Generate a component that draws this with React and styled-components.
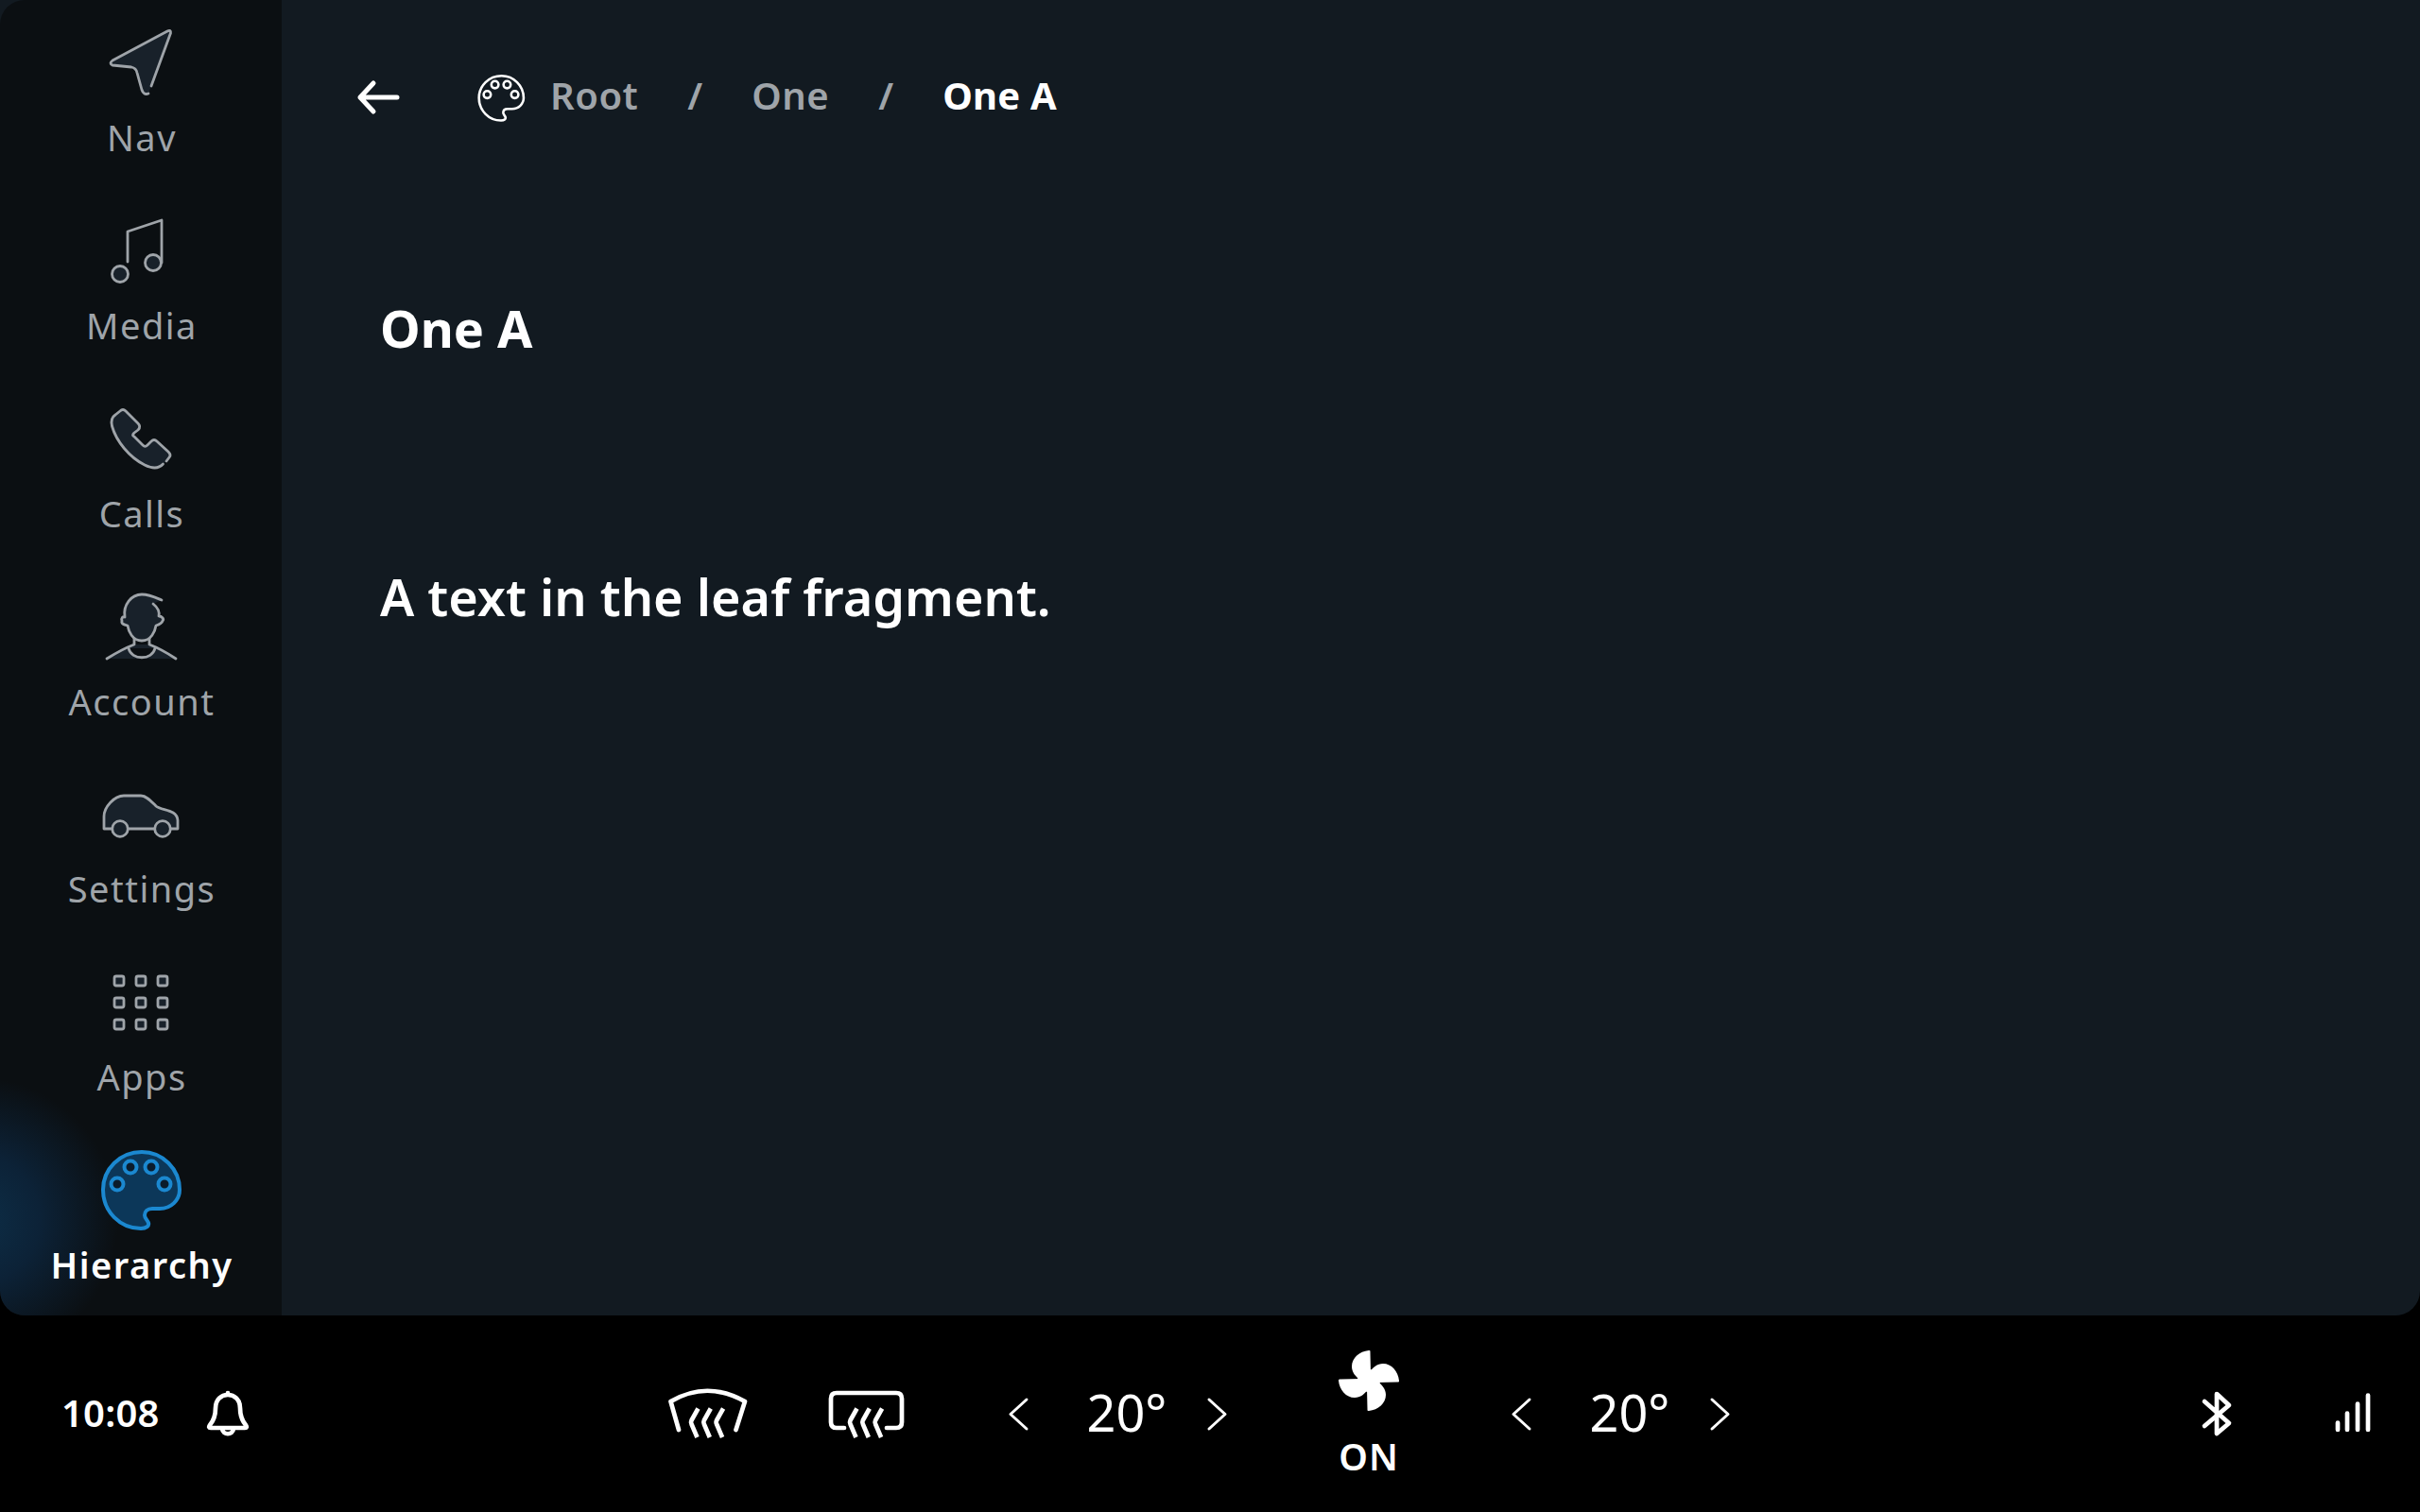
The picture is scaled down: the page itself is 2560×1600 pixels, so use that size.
import React from 'react'
import styled, { createGlobalStyle } from 'styled-components'

const GlobalStyle = createGlobalStyle`
  html, body {
    margin: 0;
    padding: 0;
    background: #000;
  }
  body {
    font-family: "Noto Sans", sans-serif;
  }
`

const Screen = styled.div`
  width: 2560px;
  height: 1600px;
  display: flex;
  flex-direction: column;
  background: #000;
  overflow: hidden;
`

const Main = styled.div`
  height: 1392px;
  display: flex;
  background: #121a21;
  border-radius: 0 0 26px 26px;
  overflow: hidden;
`

const Rail = styled.nav`
  width: 298px;
  flex: none;
  display: grid;
  grid-template-rows: repeat(7, 1fr);
  background: radial-gradient(circle 150px at -25px 1290px, #0d2e47 0%, #0c2237 45%, rgba(11, 15, 18, 0) 100%), #0b0f12;
  border-radius: 26px 0 0 26px;
`

const RailItem = styled.div`
  display: flex;
  flex-direction: column;
  align-items: center;
  padding-top: 17px;
  color: ${props => (props.$active ? '#fff' : '#9fa4a9')};
`

const RailLabel = styled.span`
  margin-top: 6px;
  padding-left: 2px;
  font-size: 38px;
  line-height: 52px;
  letter-spacing: 1.5px;
  font-weight: ${props => (props.$active ? 600 : 400)};
`

const Icon = styled.svg`
  width: 96px;
  height: 96px;
  flex: none;
  display: block;
  fill: #18212a;
  stroke: #9fa4a9;
  stroke-width: 2.8;
  stroke-linecap: round;
  stroke-linejoin: round;
`

const ActiveIcon = styled(Icon)`
  fill: #0c3759;
  stroke: #1b88d0;
  stroke-width: 4;
`

const Content = styled.section`
  flex: 1;
  display: flex;
  flex-direction: column;
`

const Breadcrumbs = styled.header`
  height: 201px;
  display: flex;
  align-items: center;
  padding-left: 62px;
`

const BackIcon = styled.svg`
  width: 80px;
  height: 80px;
  margin-top: 5px;
  flex: none;
  fill: none;
  stroke: #fff;
  stroke-width: 5;
  stroke-linecap: round;
  stroke-linejoin: round;
`

const CrumbIcon = styled.svg`
  width: 56px;
  height: 56px;
  margin-top: 5px;
  margin-left: 62px;
  flex: none;
  fill: none;
  stroke: #fff;
  stroke-width: 4.4;
`

const Crumb = styled.span`
  font-size: 40px;
  letter-spacing: ${props => (props.$current ? '0.2px' : '0.5px')};
  font-weight: ${props => (props.$current ? 700 : 600)};
  color: ${props => (props.$current ? '#fff' : '#9fa4a9')};
  margin-left: ${props => (props.$first ? '24px' : '0')};
`

const Slash = styled.span`
  font-size: 40px;
  font-weight: 600;
  color: #9fa4a9;
  margin: 0 52px;
`

const Title = styled.h1`
  margin: 111px 0 0;
  padding-left: 104px;
  font-size: 54px;
  line-height: 70px;
  font-weight: 700;
  color: #fff;
`

const Body = styled.p`
  margin: 214px 0 0;
  padding-left: 104px;
  font-size: 54px;
  line-height: 70px;
  font-weight: 600;
  color: #fff;
`

const Dock = styled.footer`
  flex: 1;
  display: grid;
  grid-template-columns: 1fr auto 1fr;
  align-items: center;
  color: #fff;
`

const DockLeft = styled.div`
  display: flex;
  align-items: center;
  padding-left: 65px;
`

const Clock = styled.span`
  margin-bottom: 4px;
  font-size: 40px;
  letter-spacing: 0.2px;
  font-weight: 600;
`

const DockIcon = styled.svg`
  width: ${props => props.$size || 64}px;
  height: ${props => props.$size || 64}px;
  flex: none;
  display: block;
  fill: none;
  stroke: #fff;
  stroke-width: 4.7;
  stroke-linecap: round;
  stroke-linejoin: round;
`

const BellIcon = styled(DockIcon)`
  margin-left: 40px;
  margin-bottom: 2px;
`

const ChevronIcon = styled(DockIcon)`
  stroke-width: 3;
`

const Climate = styled.div`
  display: flex;
  align-items: center;
  margin-right: 19px;
`

const DefrostGroup = styled.div`
  display: flex;
  align-items: center;
  gap: 80px;
  margin-right: 95px;
`

const Temp = styled.div`
  display: flex;
  align-items: center;
`

const TempValue = styled.span`
  box-sizing: border-box;
  width: 169px;
  margin-bottom: 4px;
  padding-left: 20px;
  text-align: center;
  font-size: 54px;
  font-weight: 400;
`

const Fan = styled.div`
  width: 283px;
  padding-top: 2px;
  display: flex;
  flex-direction: column;
  align-items: center;
`

const FanLabel = styled.span`
  margin-top: 21px;
  font-size: 39px;
  line-height: 52px;
  font-weight: 600;
  letter-spacing: 1px;
`

const DockRight = styled.div`
  display: flex;
  align-items: center;
  justify-content: flex-end;
  gap: 80px;
  padding-right: 39px;
`

const PALETTE = 'M49 9C26 9 8 27 8 49C8 72 26 90 48 90C54 90 57 87 56 84C55 81 52 79 52 76C52 72 55 69 60 69H68C80 69 89 60 89 49C89 27 71 9 49 9Z'

const PaletteDots = ({ fill }) => (
  <g fill={fill}>
    <circle cx="23" cy="43" r="6.500" />
    <circle cx="37" cy="25" r="6.500" />
    <circle cx="59" cy="25" r="6.500" />
    <circle cx="73" cy="43" r="6.500" />
  </g>
)

const navItems = [
  {
    label: 'Nav',
    icon: <path d="M59 74L79.500 18Q80 14 76 16L18 47Q14 50 18 52L38 54Q43 55 44 60L49 78Q51 84 56 82" />,
  },
  {
    label: 'Media',
    icon: (
      <>
        <path fill="none" d="M34 61V29L70 17V62" />
        <circle cx="61" cy="62" r="8.500" />
        <circle cx="26" cy="74" r="8.500" />
      </>
    ),
  },
  {
    label: 'Calls',
    icon: <path d="M71.500 76C67 81 60 81 52 77C36 69 22 52 17.500 36C16 30 18 26 21 24L26 20C28 18 30 18 32 20L45 33C48 36 47 38 45 40L41 43C39 45 39 46 41 47L50 56C52 58 53 58 55 56L59 52C61 50 63 50 65 52L77 63C79 65 80 67 78 69L75 73" />,
  },
  {
    label: 'Account',
    icon: (
      <>
        <path stroke="none" d="M12 83Q28 73 41 68H57Q70 73 85 83Z" />
        <path fill="#0b0f12" d="M35 72C38 85 60 85 63 72" />
        <path fill="none" d="M12 83Q28 73 41 68V61M85 83Q70 73 57 68V61" />
        <path d="M61 25C66 29 68 33 67 38C70 38 73 41 71 43C70 46 67 47 64 48C63 54 59 64 49 64C39 64 35 54 34 48C30 47 27 46 28 43C27 40 29 38 31 39C29 26 38 15 49 15C57 15 63 18 70 21" />
      </>
    ),
  },
  {
    label: 'Settings',
    icon: (
      <>
        <path d="M17.500 65H9V52C9 42 20 30 30 30H48C54 30 59 36 64 41C70 46 86 44 87 56V65H79.500M63 65H34.500" />
        <circle cx="26" cy="65" r="8.300" />
        <circle cx="71" cy="65" r="8.300" />
      </>
    ),
  },
  {
    label: 'Apps',
    icon: [27, 50, 73].flatMap(y =>
      [25, 48, 71].map(x => <rect key={`${x}-${y}`} x={x - 5} y={y - 5} width="10" height="10" rx="2" />)
    ),
  },
]

// three heat lines shared by both defrost icons, dx moves them sideways
const DefrostWaves = ({ dx = 0 }) => (
  <g transform={`translate(${dx} 0)`} strokeLinecap="butt">
    {[0, 13.3, 26.6].map(x => (
      <path key={x} transform={`translate(${x} 0)`} d="M35.500 39.500L28.500 52Q27.500 54 28.500 56L34.500 70" />
    ))}
  </g>
)

const Temperature = () => (
  <Temp>
    <ChevronIcon viewBox="0 0 40 40" $size={40}>
      <path d="M28 5L11 20.500 28 36" />
    </ChevronIcon>
    <TempValue>20°</TempValue>
    <ChevronIcon viewBox="0 0 40 40" $size={40}>
      <path d="M12 5L29 20.500 12 36" />
    </ChevronIcon>
  </Temp>
)

const App = () => {
  return (
    <Screen>
      <GlobalStyle />
      <Main>
        <Rail>
          {navItems.map(item => (
            <RailItem key={item.label}>
              <Icon viewBox="0 0 96 96">{item.icon}</Icon>
              <RailLabel>{item.label}</RailLabel>
            </RailItem>
          ))}
          <RailItem $active>
            <ActiveIcon viewBox="0 0 96 96">
              <path d={PALETTE} />
              <PaletteDots fill="#0b1c2c" />
            </ActiveIcon>
            <RailLabel $active>Hierarchy</RailLabel>
          </RailItem>
        </Rail>
        <Content>
          <Breadcrumbs>
            <BackIcon viewBox="0 0 80 80">
              <path d="M60 40H21M35 25L21 40 35 55" />
            </BackIcon>
            <CrumbIcon viewBox="0 0 96 96">
              <path d={PALETTE} />
              <PaletteDots />
            </CrumbIcon>
            <Crumb $first>Root</Crumb>
            <Slash>/</Slash>
            <Crumb>One</Crumb>
            <Slash>/</Slash>
            <Crumb $current>One A</Crumb>
          </Breadcrumbs>
          <Title>One A</Title>
          <Body>A text in the leaf fragment.</Body>
        </Content>
      </Main>
      <Dock>
        <DockLeft>
          <Clock>10:08</Clock>
          <BellIcon viewBox="0 0 64 64">
            <path d="M13 45Q19 38 19 27C19 18 25 13 32 13S45 18 45 27Q45 38 51 45Q53 48 50 48H14Q11 48 13 45ZM26 49C27 56 37 56 38 49M32 11V12" />
          </BellIcon>
        </DockLeft>
        <Climate>
          <DefrostGroup>
            <DockIcon viewBox="0 0 90 90" $size={90}>
              <path d="M15 62L6.500 32Q45 9.500 85 32L75.500 62" />
              <DefrostWaves />
            </DockIcon>
            <DockIcon viewBox="0 0 90 90" $size={90}>
              <path d="M20 60H12Q6 60 6 54V29Q6 23 12 23H75Q81 23 81 29V54Q81 60 75 60H65" />
              <DefrostWaves dx={-2} />
            </DockIcon>
          </DefrostGroup>
          <Temperature />
          <Fan>
            <DockIcon viewBox="-33 -33 66 66" $size={66}>
              <circle r="12" fill="#fff" stroke="none" />
              {[0, 90, 180, 270].map(angle => (
                <path
                  key={angle}
                  fill="#fff"
                  stroke="none"
                  transform={`rotate(${angle})`}
                  d="M2 -8L1.500 -30Q2 -32.500 0 -32C-10 -31 -18 -24 -18 -15C-18 -9 -14 -4 -9 -1Z"
                />
              ))}
            </DockIcon>
            <FanLabel>ON</FanLabel>
          </Fan>
          <Temperature />
        </Climate>
        <DockRight>
          <DockIcon viewBox="0 0 64 64">
            <path d="M19 19L45 42 32 53V11L45 23 19 45" />
          </DockIcon>
          <DockIcon viewBox="0 0 64 64">
            <path d="M16 41.500V49M26 31.500V49M37 21.500V49M48 12.500V49" />
          </DockIcon>
        </DockRight>
      </Dock>
    </Screen>
  )
}

export default App
